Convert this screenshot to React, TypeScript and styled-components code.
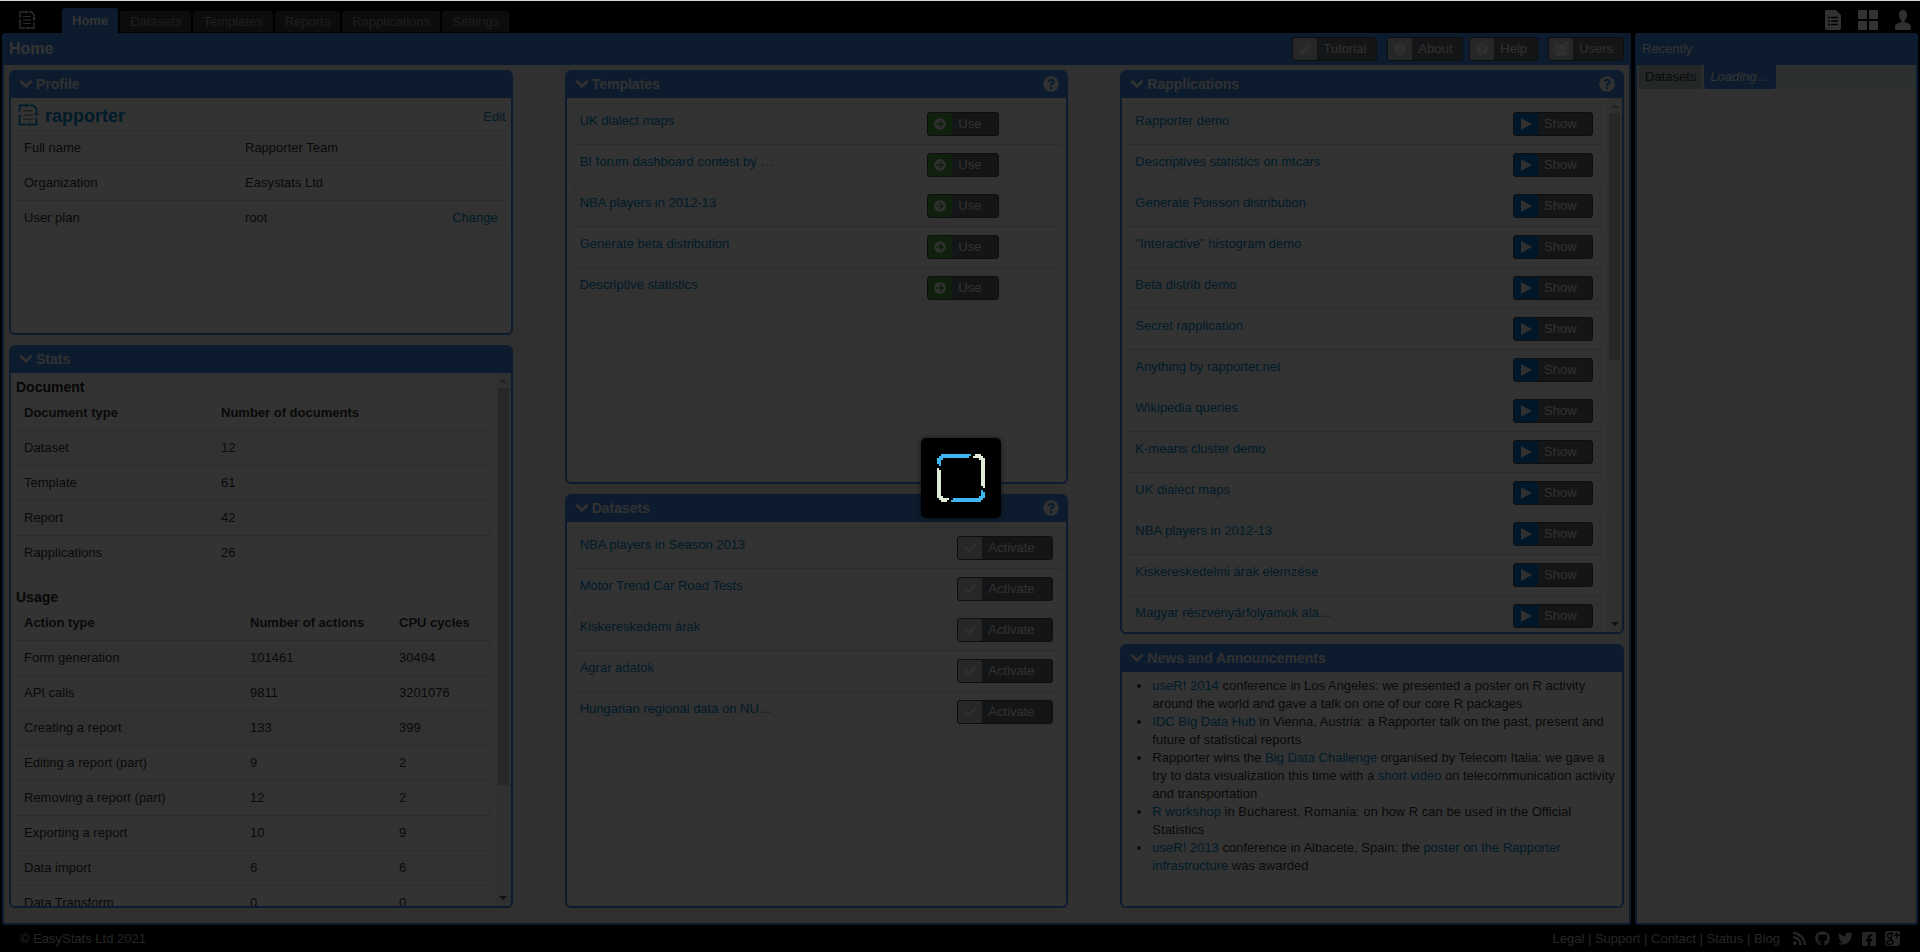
import React from "react";
import styled, { createGlobalStyle, css } from "styled-components";
import {
  FaArrowCircleRight,
  FaCheck,
  FaChevronDown,
  FaFacebookSquare,
  FaGithub,
  FaInfoCircle,
  FaMagic,
  FaQuestionCircle,
  FaRss,
  FaTwitter,
} from "react-icons/fa";

const color = {
  blue: "#3c87e1",
  link: "#0088cc",
  text: "#333333",
  page: "#f1f1f1",
  line: "#dddddd",
};

const GlobalStyle = createGlobalStyle`
  *, *::before, *::after { box-sizing: border-box; }
  body {
    margin: 0;
    background: #000;
    color: ${color.text};
    font-family: "Liberation Sans", Arial, sans-serif;
    font-size: 13px;
    line-height: 18px;
  }
  button { font: inherit; cursor: pointer; }
  a { color: ${color.link}; text-decoration: none; }
  svg { display: block; flex: none; }
`;

const Shell = styled.div`
  display: flex;
  flex-direction: column;
  height: 100vh;
  border-top: 1px solid #d6dadd;
`;

/* ---------- top bar ---------- */

const TopBar = styled.header`
  display: flex;
  align-items: flex-end;
  height: 32px;
  padding: 0 9px 0 18px;
`;

const Brand = styled.a`
  width: 44px;
  padding-bottom: 3px;
  color: #e6e6e6;
`;

const Tabs = styled.nav`
  display: flex;
  align-items: flex-end;
  gap: 2px;
  flex: 1;
`;

const Tab = styled.a<{ $active?: boolean }>`
  height: 21px;
  margin-bottom: 1px;
  padding: 0 10px;
  border-radius: 3px 3px 0 0;
  background: #3c3c42;
  color: #999;
  line-height: 21px;
  ${(p) =>
    p.$active &&
    css`
      height: 25px;
      margin-bottom: 0;
      background: ${color.blue};
      color: #fff;
      font-weight: bold;
      line-height: 25px;
    `}
`;

const TopActions = styled.div`
  display: flex;
  gap: 17px;
  padding-bottom: 3px;
`;

const PlainButton = styled.button`
  padding: 0;
  border: 0;
  background: none;
  color: #f4f4f4;
`;

/* ---------- work area ---------- */

const Workspace = styled.div`
  display: flex;
  flex: 1;
  gap: 4px;
  min-height: 0;
  padding: 0 2px;
`;

const Frame = styled.main`
  display: flex;
  flex: 1;
  flex-direction: column;
  min-width: 0;
  border: 2px solid ${color.blue};
  border-top: 0;
  border-radius: 3px;
  background: ${color.page};
  overflow: hidden;
`;

const SideFrame = styled(Frame).attrs({ as: "aside" })`
  flex: 0 0 283px;
`;

const FrameHeader = styled.div`
  display: flex;
  align-items: center;
  justify-content: space-between;
  height: 32px;
  padding: 0 5px;
  background: ${color.blue};
  color: #fff;
`;

const PageTitle = styled.h1`
  margin: 0;
  font-size: 16px;
`;

const SideTitle = styled.h2`
  margin: 0;
  font-size: 13px;
  font-weight: normal;
`;

const HeaderTools = styled.div`
  display: flex;
  gap: 10px;
`;

const ToolPair = styled.div`
  display: flex;
  gap: 6px;
`;

const SideTabs = styled.div`
  display: flex;
  gap: 2px;
  height: 24px;
  padding-left: 2px;
  background: #dcebeb;
`;

const SideTab = styled.button<{ $active?: boolean }>`
  padding: 0 6px;
  border: 0;
  border-radius: 0 0 3px 3px;
  background: ${(p) => (p.$active ? color.blue : "#b0c0c0")};
  color: ${(p) => (p.$active ? "#fff" : "#333")};
  font-style: ${(p) => (p.$active ? "italic" : "normal")};
`;

const Columns = styled.div`
  display: flex;
  flex: 1;
  gap: 52px;
  min-height: 0;
  padding: 5px 5px 15px;
`;

const Column = styled.div`
  display: flex;
  flex: 1 1 0;
  flex-direction: column;
  gap: 10px;
  min-width: 0;
`;

/* ---------- panel ---------- */

const PanelBox = styled.section<{ $grow: number }>`
  display: flex;
  flex: ${(p) => p.$grow} 1 0;
  flex-direction: column;
  min-height: 0;
  border: 2px solid ${color.blue};
  border-top: 0;
  border-radius: 6px;
  background: #fff;
  overflow: hidden;
`;

const PanelHeader = styled.div`
  display: flex;
  align-items: center;
  gap: 3px;
  height: 28px;
  flex: none;
  padding: 0 7px 0 8px;
  background: ${color.blue};
  color: #f4f4f4;
`;

const Chevron = styled(FaChevronDown)`
  stroke: currentColor;
  stroke-width: 30px;
`;

const PanelTitle = styled.h2`
  flex: 1;
  margin: 0;
  font-size: 14px;
`;

const PanelMain = styled.div`
  display: flex;
  flex: 1;
  min-height: 0;
`;

const PanelBody = styled.div`
  flex: 1;
  min-width: 0;
  padding: 5px;
  overflow: hidden;
`;

const Track = styled.div`
  display: flex;
  flex: none;
  flex-direction: column;
  width: 15px;
  padding: 5px 0;
  align-items: center;
  background: #f1f1f1;
`;

const Arrow = styled.i<{ $down?: boolean }>`
  height: 10px;
  flex: none;
  display: flex;
  align-items: ${(p) => (p.$down ? "flex-end" : "flex-start")};
  padding: 1px 0;
  &::before {
    content: "";
    border: 4px solid transparent;
    ${(p) =>
      p.$down
        ? "border-top-color: #505050; border-bottom: 0;"
        : "border-bottom-color: #a3a3a3; border-top: 0;"}
  }
`;

const Rail = styled.div`
  flex: 1;
  width: 11px;
`;

const Thumb = styled.div<{ $size: number }>`
  height: ${(p) => p.$size}%;
  background: #c1c1c1;
`;

/* ---------- tables ---------- */

const Table = styled.table`
  width: 100%;
  border-collapse: separate;
  border-spacing: 0;
  table-layout: fixed;
  margin-bottom: 18px;

  th, td {
    padding: 8px;
    text-align: left;
    vertical-align: top;
    white-space: nowrap;
  }
  td { border-top: 1px solid ${color.line}; }
  tbody tr:nth-child(odd) td { background: #f9f9f9; }
`;

const Col = styled.col<{ $w: number }>`
  width: ${(p) => p.$w}px;
`;

const EndCell = styled.td`
  && { text-align: right; }
`;

const TableTitle = styled.h3`
  margin: 0;
  color: #262626;
  font-size: 14px;
  line-height: 18px;
`;

const Identity = styled.div`
  display: flex;
  align-items: flex-start;
  gap: 6px;
  height: 27px;
  padding-left: 1px;
  color: ${color.link};
  line-height: 27px;
`;

const UserName = styled.strong`
  flex: 1;
  font-size: 18px;
  line-height: 26px;
`;

/* ---------- labelled icon button ---------- */

const tones = { plain: "#b9c4c6", green: "#4ba53c", blue: "#0074d2" };

const ToolButton = styled.button<{ $width?: number }>`
  display: flex;
  align-items: center;
  gap: 6px;
  width: ${(p) => (p.$width ? `${p.$width}px` : "auto")};
  height: 24px;
  padding: 0 10px 0 0;
  border: 1px solid #464646;
  border-radius: 3px;
  background: #666b70;
  color: #eee;
  line-height: 22px;
  white-space: nowrap;
`;

const ToolIcon = styled.span<{ $tone: keyof typeof tones }>`
  display: flex;
  align-items: center;
  justify-content: center;
  width: 24px;
  height: 22px;
  border-radius: 2px;
  background: ${(p) => tones[p.$tone]};
  color: #eee;
`;

const NewsList = styled.ul`
  margin: 0;
  padding-left: 25px;
`;

/* ---------- footer ---------- */

const Footer = styled.footer`
  display: flex;
  align-items: center;
  height: 27px;
  padding: 0 20px;
  color: #bbb;

  a { color: inherit; }
`;

const FooterLinks = styled.nav`
  flex: 1;
  text-align: right;
`;

const Social = styled.div`
  display: flex;
  gap: 8px;
  margin-left: 12px;
`;

/* ---------- loading layer ---------- */

const Overlay = styled.div`
  position: fixed;
  inset: 1px 0 0;
  display: flex;
  align-items: center;
  justify-content: center;
  padding: 3px 0 0 2px;
  background: rgba(0, 0, 0, 0.8);
`;

const SpinnerBox = styled.div`
  display: flex;
  align-items: center;
  justify-content: center;
  width: 80px;
  height: 80px;
  border-radius: 5px;
  background: #000;
  box-shadow: 0 0 6px rgba(0, 0, 0, 0.6);
`;

/* ---------- drawings ---------- */

const Logo = ({ size, lines }: { size: number; lines?: string }) => (
  <svg width={size - 2} height={size} viewBox="0 0 18 20" fill="none" stroke="currentColor" strokeWidth="1.4">
    <path d="M2 7.500V2H8M10.5 2H13.500L16 4.500V9M16 12.500V18H10M7.500 18H2V11.500" />
    <g fill="currentColor" stroke="none">
      <path d="M8 0L10 2L8 4zM14 8.500H18L16 10.700zM10 16V20L8 18zM0 11.500H4L2 9.300z" />
    </g>
    <path stroke={lines ?? "currentColor"} strokeWidth="1.2" d="M5 6.500H12.500M5 10H13M5 13.500H13" />
  </svg>
);

const DocIcon = () => (
  <svg width="16" height="20" viewBox="0 0 16 20">
    <path fill="currentColor" d="M1 0H11L16 5V19L15 20H1L0 19V1z" />
    <path stroke="#000" strokeWidth="1.6" d="M3 7.500H5M6 7.500H13M3 11H5M6 11H13M3 14.500H5M6 14.500H13" />
  </svg>
);

const GridIcon = () => (
  <svg width="20" height="20" viewBox="0 0 20 20" fill="currentColor">
    <rect width="9" height="9" rx="1" />
    <rect x="11" width="9" height="9" rx="1" />
    <rect y="11" width="9" height="9" rx="1" />
    <rect x="11" y="11" width="9" height="9" rx="1" />
  </svg>
);

const PersonIcon = () => (
  <svg width="16" height="20" viewBox="0 0 16 20" fill="currentColor">
    <path d="M8 0C10.800 0 12.200 2 12 5C11.800 7.500 10.800 9.500 9.600 10.500V12.200C13 13 16 13.500 16 17V19L15 20H1L0 19V17C0 13.500 3 13 6.400 12.200V10.500C5.200 9.500 4.200 7.500 4 5C3.800 2 5.200 0 8 0z" />
  </svg>
);

const GroupIcon = () => (
  <svg width="15" height="14" viewBox="0 0 15 14" fill="currentColor">
    <circle cx="3" cy="2" r="2" />
    <circle cx="12" cy="2" r="2" />
    <circle cx="7.500" cy="5" r="3" />
    <path d="M0 7.500V6Q0 4.200 1.500 4.200Q2.800 4.800 4 4.600Q4 6.200 4.800 7.500zM15 7.500V6Q15 4.200 13.500 4.200Q12.200 4.800 11 4.600Q11 6.200 10.200 7.500z" />
    <path d="M2 12.500Q2 8 5 7.800Q7.500 9.800 10 7.800Q13 8 13 12.500Q12.800 14 11.500 14H3.500Q2.200 14 2 12.500z" />
  </svg>
);

const PlayIcon = () => (
  <svg width="11" height="12" viewBox="0 0 11 12" fill="currentColor">
    <path d="M0 0L11 6L0 12z" />
  </svg>
);

const GooglePlusIcon = () => (
  <svg width="15" height="15" viewBox="0 0 16 16">
    <rect width="16" height="16" rx="2.500" fill="currentColor" />
    <g fill="none" stroke="#000" strokeWidth="1.500">
      <ellipse cx="5" cy="5" rx="2.200" ry="2.600" />
      <path d="M5 2.300H9M6 7.500C4.500 8.500 8.500 9 8.500 12C8.500 14 6 14.600 4 14.300C1.500 14 1 12 2.500 11C3.500 10.400 5 10.300 6.500 10.300M12.500 1.500V7.500M9.500 4.500H15.500" />
    </g>
  </svg>
);

const Spinner = () => (
  <svg width="48" height="48" viewBox="0 0 24 24" shapeRendering="crispEdges">
    <path
      fill="#3eb7f0"
      d="M2 0H17V1H16V2H3V3H2V6H1V5H0V2H1V1H2zM22 24H7V23H8V22H21V21H22V18H23V19H24V22H23V23H22z"
    />
    <path
      fill="#dfecd6"
      d="M19 0H22V1H23V2H24V17H23V16H22V3H21V2H18V1H19zM5 24H2V23H1V22H0V7H1V8H2V21H3V22H6V23H5z"
    />
  </svg>
);

/* ---------- composed parts ---------- */

type PanelProps = {
  title: string;
  grow: number;
  help?: boolean;
  thumb?: number;
  children: React.ReactNode;
};

const Panel = ({ title, grow, help, thumb, children }: PanelProps) => (
  <PanelBox $grow={grow}>
    <PanelHeader>
      <PlainButton aria-label={`Collapse ${title}`}>
        <Chevron size={14} />
      </PlainButton>
      <PanelTitle>{title}</PanelTitle>
      {help && (
        <PlainButton aria-label={`${title} help`}>
          <FaQuestionCircle size={16} />
        </PlainButton>
      )}
    </PanelHeader>
    <PanelMain>
      <PanelBody>{children}</PanelBody>
      {thumb && (
        <Track aria-hidden="true">
          <Arrow />
          <Rail>
            <Thumb $size={thumb} />
          </Rail>
          <Arrow $down />
        </Track>
      )}
    </PanelMain>
  </PanelBox>
);

type ActionProps = {
  icon: React.ReactNode;
  label: string;
  tone?: keyof typeof tones;
  width?: number;
};

const Action = ({ icon, label, tone = "plain", width }: ActionProps) => (
  <ToolButton $width={width}>
    <ToolIcon $tone={tone}>{icon}</ToolIcon>
    {label}
  </ToolButton>
);

type ListProps = { items: string[]; cell: number; action: React.ReactNode };

const ActionList = ({ items, cell, action }: ListProps) => (
  <Table>
    <colgroup>
      <col />
      <Col $w={cell} />
    </colgroup>
    <tbody>
      {items.map((name) => (
        <tr key={name}>
          <td>
            <a href="#item">{name}</a>
          </td>
          <td>{action}</td>
        </tr>
      ))}
    </tbody>
  </Table>
);

type DataProps = { widths: number[]; head: string[]; rows: string[][] };

const DataTable = ({ widths, head, rows }: DataProps) => (
  <Table>
    <colgroup>
      {widths.map((w) => (
        <Col key={w} $w={w} />
      ))}
      <col />
    </colgroup>
    <thead>
      <tr>
        {head.map((h) => (
          <th key={h} scope="col">
            {h}
          </th>
        ))}
      </tr>
    </thead>
    <tbody>
      {rows.map((row) => (
        <tr key={row[0]}>
          {row.map((value, i) => (
            <td key={i}>{value}</td>
          ))}
        </tr>
      ))}
    </tbody>
  </Table>
);

const tabs = ["Datasets", "Templates", "Reports", "Rapplications", "Settings"];

const templates = [
  "UK dialect maps",
  "BI forum dashboard contest by …",
  "NBA players in 2012-13",
  "Generate beta distribution",
  "Descriptive statistics",
];

const datasets = [
  "NBA players in Season 2013",
  "Motor Trend Car Road Tests",
  "Kiskereskedemi árak",
  "Agrar adatok",
  "Hungarian regional data on NU…",
];

const rapplications = [
  "Rapporter demo",
  "Descriptives statistics on mtcars",
  "Generate Poisson distribution",
  '"Interactive" histogram demo',
  "Beta distrib demo",
  "Secret rapplication",
  "Anything by rapporter.net",
  "Wikipedia queries",
  "K-means cluster demo",
  "UK dialect maps",
  "NBA players in 2012-13",
  "Kiskereskedelmi árak elemzése",
  "Magyar részvényárfolyamok ala…",
];

const documents = [
  ["Dataset", "12"],
  ["Template", "61"],
  ["Report", "42"],
  ["Rapplications", "26"],
];

const usage = [
  ["Form generation", "101461", "30494"],
  ["API calls", "9811", "3201076"],
  ["Creating a report", "133", "399"],
  ["Editing a report (part)", "9", "2"],
  ["Removing a report (part)", "12", "2"],
  ["Exporting a report", "10", "9"],
  ["Data import", "6", "6"],
  ["Data Transform", "0", "0"],
];

const footerLinks = ["Legal", "Support", "Contact", "Status", "Blog"];

export default function App() {
  return (
    <>
      <GlobalStyle />
      <Shell>
        <TopBar>
          <Brand href="#home" aria-label="Rapporter">
            <Logo size={20} />
          </Brand>
          <Tabs>
            <Tab href="#home" $active>
              Home
            </Tab>
            {tabs.map((t) => (
              <Tab key={t} href={`#${t}`}>
                {t}
              </Tab>
            ))}
          </Tabs>
          <TopActions>
            <PlainButton aria-label="Reports">
              <DocIcon />
            </PlainButton>
            <PlainButton aria-label="Dashboard">
              <GridIcon />
            </PlainButton>
            <PlainButton aria-label="Account">
              <PersonIcon />
            </PlainButton>
          </TopActions>
        </TopBar>

        <Workspace>
          <Frame>
            <FrameHeader>
              <PageTitle>Home</PageTitle>
              <HeaderTools>
                <Action icon={<FaMagic size={12} />} label="Tutorial" />
                <ToolPair>
                  <Action icon={<FaInfoCircle size={12} />} label="About" />
                  <Action icon={<FaQuestionCircle size={12} />} label="Help" />
                </ToolPair>
                <Action icon={<GroupIcon />} label="Users" />
              </HeaderTools>
            </FrameHeader>

            <Columns>
              <Column>
                <Panel title="Profile" grow={319}>
                  <Identity>
                    <Logo size={24} lines="#999" />
                    <UserName>rapporter</UserName>
                    <a href="#edit">Edit</a>
                  </Identity>
                  <Table>
                    <colgroup>
                      <Col $w={221} />
                      <col />
                      <Col $w={80} />
                    </colgroup>
                    <tbody>
                      <tr>
                        <td>Full name</td>
                        <td colSpan={2}>Rapporter Team</td>
                      </tr>
                      <tr>
                        <td>Organization</td>
                        <td colSpan={2}>Easystats Ltd</td>
                      </tr>
                      <tr>
                        <td>User plan</td>
                        <td>root</td>
                        <EndCell>
                          <a href="#plan">Change</a>
                        </EndCell>
                      </tr>
                    </tbody>
                  </Table>
                </Panel>
                <Panel title="Stats" grow={681} thumb={79}>
                  <TableTitle>Document</TableTitle>
                  <DataTable widths={[197]} head={["Document type", "Number of documents"]} rows={documents} />
                  <TableTitle>Usage</TableTitle>
                  <DataTable
                    widths={[226, 149]}
                    head={["Action type", "Number of actions", "CPU cycles"]}
                    rows={usage}
                  />
                </Panel>
              </Column>

              <Column>
                <Panel title="Templates" grow={500} help>
                  <ActionList
                    items={templates}
                    cell={142}
                    action={<Action icon={<FaArrowCircleRight size={12} />} label="Use" tone="green" width={72} />}
                  />
                </Panel>
                <Panel title="Datasets" grow={500} help>
                  <ActionList
                    items={datasets}
                    cell={112}
                    action={<Action icon={<FaCheck size={12} />} label="Activate" width={96} />}
                  />
                </Panel>
              </Column>

              <Column>
                <Panel title="Rapplications" grow={682} help thumb={49}>
                  <ActionList
                    items={rapplications}
                    cell={97}
                    action={<Action icon={<PlayIcon />} label="Show" tone="blue" width={80} />}
                  />
                </Panel>
                <Panel title="News and Announcements" grow={318}>
                  <NewsList>
                    <li>
                      <a href="#user2014">useR! 2014</a> conference in Los Angeles: we presented a poster on R
                      activity around the world and gave a talk on one of our core R packages
                    </li>
                    <li>
                      <a href="#idc">IDC Big Data Hub</a> in Vienna, Austria: a Rapporter talk on the past, present
                      and future of statistical reports
                    </li>
                    <li>
                      Rapporter wins the <a href="#challenge">Big Data Challenge</a> organised by Telecom Italia: we
                      gave a try to data visualization this time with a <a href="#video">short video</a> on
                      telecommunication activity and transportation
                    </li>
                    <li>
                      <a href="#workshop">R workshop</a> in Bucharest, Romania: on how R can be used in the Official
                      Statistics
                    </li>
                    <li>
                      <a href="#user2013">useR! 2013</a> conference in Albacete, Spain: the{" "}
                      <a href="#poster">poster on the Rapporter infrastructure</a> was awarded
                    </li>
                  </NewsList>
                </Panel>
              </Column>
            </Columns>
          </Frame>

          <SideFrame>
            <FrameHeader>
              <SideTitle>Recently</SideTitle>
            </FrameHeader>
            <SideTabs>
              <SideTab>Datasets</SideTab>
              <SideTab $active>Loading…</SideTab>
            </SideTabs>
          </SideFrame>
        </Workspace>

        <Footer>
          <span>© EasyStats Ltd 2021</span>
          <FooterLinks>
            {footerLinks.map((name, i) => (
              <React.Fragment key={name}>
                {i > 0 && " | "}
                <a href={`#${name}`}>{name}</a>
              </React.Fragment>
            ))}
          </FooterLinks>
          <Social>
            <a href="#rss" aria-label="RSS">
              <FaRss size={15} />
            </a>
            <a href="#github" aria-label="GitHub">
              <FaGithub size={15} />
            </a>
            <a href="#twitter" aria-label="Twitter">
              <FaTwitter size={15} />
            </a>
            <a href="#facebook" aria-label="Facebook">
              <FaFacebookSquare size={16} />
            </a>
            <a href="#google" aria-label="Google Plus">
              <GooglePlusIcon />
            </a>
          </Social>
        </Footer>
      </Shell>

      <Overlay role="status" aria-label="Loading">
        <SpinnerBox>
          <Spinner />
        </SpinnerBox>
      </Overlay>
    </>
  );
}
